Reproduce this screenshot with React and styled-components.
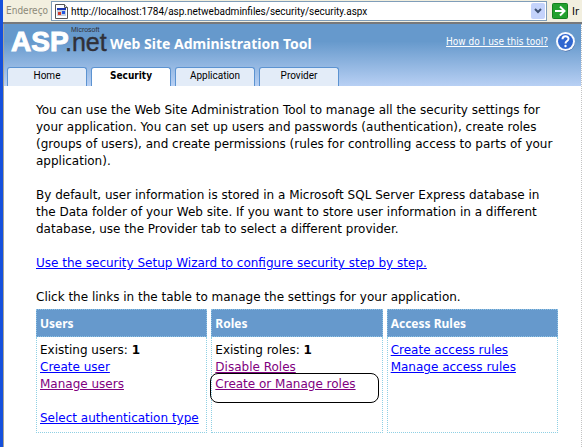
import React from 'react'
import styled, { createGlobalStyle } from 'styled-components'

const GlobalStyle = createGlobalStyle`
* { box-sizing: border-box; }
body {
  margin: 0;
  background: #fff;
  color: #000;
  font-family: "DejaVu Sans", Verdana, sans-serif;
  font-size: 12px;
  line-height: 17px;
}
`

const Page = styled.div`
  min-height: 100vh;
  border-left: 3px solid #1550dc;
  overflow-x: hidden;
`

const AddressBar = styled.form`
  display: flex;
  align-items: center;
  height: 24px;
  padding-left: 3px;
  background: #f2efdf;
  border-bottom: 2px solid #77797c;
  font-family: "DejaVu Sans Condensed", Tahoma, sans-serif;
  font-size: 10px;
  line-height: 14px;
`

const AddressLabel = styled.label`
  width: 45px;
  color: #8b8878;
`

const AddressField = styled.div`
  display: flex;
  flex: 1;
  align-items: center;
  gap: 3px;
  min-width: 0;
  height: 20px;
  padding: 0 1px 0 3px;
  background: #fff;
  border: 1px solid #7f9db9;
`

const AddressInput = styled.input`
  flex: 1;
  min-width: 0;
  padding: 0;
  border: none;
  outline: none;
  background: transparent;
  color: #000;
  font-family: Roboto, Tahoma, sans-serif;
  font-size: 10px;
`

const DropButton = styled.button`
  display: flex;
  align-items: center;
  justify-content: center;
  width: 14px;
  height: 16px;
  padding: 0;
  border: none;
  border-radius: 2px;
  background: #c4d3fb;
`

const GoButton = styled.button`
  display: flex;
  align-items: center;
  gap: 4px;
  width: 35px;
  padding: 0 0 0 5px;
  border: none;
  background: transparent;
  color: #000;
  font-family: inherit;
  font-size: 11px;
`

const Main = styled.div`
  min-height: calc(100vh - 24px);
  border-left: 1px solid #a9a595;
  border-right: 1px dotted #c4c4c4;
`

const Banner = styled.header`
  background: linear-gradient(#6699cc 0%, #6699cc 28%, #b8d0f4 100%);
`

const BannerTop = styled.div`
  display: flex;
  align-items: center;
  height: 43px;
  padding: 0 5px 8px 6px;
`

const Title = styled.h1`
  flex: 1;
  margin: 0;
  padding-top: 4px;
  color: #fff;
  font-family: "Noto Sans", sans-serif;
  font-size: 14px;
  line-height: 18px;
  white-space: nowrap;
`

const HelpLink = styled.a`
  display: flex;
  align-items: center;
  gap: 7px;
  color: #fff;
  font-family: "DejaVu Sans Condensed", Tahoma, sans-serif;
  font-size: 10px;
  line-height: 14px;
  white-space: nowrap;
`

const Tabs = styled.nav`
  display: flex;
  gap: 4px;
  padding-left: 3px;
`

const Tab = styled.a`
  width: 80px;
  height: 19px;
  border: 1px solid #5c93d1;
  border-bottom: none;
  border-radius: 3px 3px 0 0;
  background: ${props => props.$active ? '#fff' : '#e3ecf8'};
  color: #000;
  font-family: ${props => props.$active ? '"DejaVu Sans Condensed"' : 'Roboto'}, Tahoma, sans-serif;
  font-size: 10px;
  font-weight: ${props => props.$active ? 700 : 400};
  line-height: 15px;
  text-align: center;
  text-decoration: none;
`

const Content = styled.main`
  padding: 16px 23px 16px 32px;
`

const Text = styled.p`
  margin: 0 0 17px;
  white-space: nowrap;
`

const Link = styled.a`
  color: ${props => props.$visited ? '#800080' : '#0000ff'};
  text-decoration: underline;
`

const SettingsTable = styled.table`
  width: calc(100% + 8px);
  margin: -14px -4px 0;
  table-layout: fixed;
  border-collapse: separate;
  border-spacing: 4px 0;
`

const HeadCell = styled.th`
  height: 28px;
  padding: 0 3px;
  background: #6699cc;
  border: 1px dotted #8fc3e4;
  color: #fff;
  font-family: "Noto Sans", sans-serif;
  font-size: 12px;
  text-align: left;
`

const Cell = styled.td`
  height: 94px;
  padding: 5px 3px;
  border: 1px dotted #8fd0e4;
  border-top: none;
  vertical-align: top;
  white-space: nowrap;
`

const Line = styled.div`
  min-height: 17px;
`

const Ringed = styled.span`
  position: relative;

  &::after {
    content: "";
    position: absolute;
    top: -4px;
    left: -5px;
    width: 167px;
    height: 28px;
    border: 1px solid #000;
    border-radius: 8px;
    pointer-events: none;
  }
`

const PageIcon = () => (
  <svg width="13" height="15" viewBox="0 0 13 15" aria-hidden="true">
    <path d="M.5.5h9l3 3v11H.5z" fill="#fff" stroke="#555" />
    <path d="M9.500.500v3h3" fill="#ddd" stroke="#555" />
    <path d="M2 5h9v7H2z" fill="#c8d0dc" />
    <path d="M2 4h9v2H2z" fill="#1b36b0" />
    <path d="M3 8h3v3H3z" fill="#d43c2c" />
    <path d="M7 7h3v3H7z" fill="#2456e0" />
  </svg>
)

const Chevron = () => (
  <svg width="8" height="6" viewBox="0 0 8 6" aria-hidden="true">
    <path d="M1 1l3 3 3-3" fill="none" stroke="#3e5173" strokeWidth="2" />
  </svg>
)

const GoIcon = () => (
  <svg width="16" height="16" viewBox="0 0 16 16" aria-hidden="true">
    <rect x=".5" y=".5" width="15" height="15" rx="1" fill="#24a02e" stroke="#15801e" />
    <path d="M3 8h9M8 3.500L12.500 8 8 12.500" fill="none" stroke="#fff" strokeWidth="2" />
  </svg>
)

const HelpIcon = () => (
  <svg width="21" height="21" viewBox="0 0 21 21" aria-hidden="true">
    <circle cx="11" cy="11.500" r="9" fill="#3c5f9c" />
    <circle cx="10.500" cy="10.500" r="9.500" fill="#f7faff" />
    <circle cx="10.500" cy="10.500" r="7.500" fill="#2f66d0" />
    <path d="M7.500 8.300c0-4 6-4 6-.5 0 2.300-3 2-3 4.700" fill="none" stroke="#fff" strokeWidth="2" />
    <circle cx="10.500" cy="15" r="1.200" fill="#fff" />
  </svg>
)

const Logo = () => (
  <svg width="100" height="34" viewBox="0 0 100 34" role="img" aria-label="Microsoft ASP.net">
    <g fontFamily="Liberation Sans, Arial, sans-serif">
      <text x="1" y="26" fontSize="28" fontWeight="700" fill="#fff" stroke="#fff">ASP</text>
      <text x="55" y="26" fontSize="25" fill="#303038" stroke="#303038" strokeWidth=".4">.net</text>
      <text x="61" y="7" fontSize="7" fill="#303038">Microsoft</text>
    </g>
  </svg>
)

const tabs = ['Home', 'Security', 'Application', 'Provider']

const App = () => {
  return (
    <Page>
      <GlobalStyle />
      <AddressBar onSubmit={e => e.preventDefault()}>
        <AddressLabel htmlFor="address">Endereço</AddressLabel>
        <AddressField>
          <PageIcon />
          <AddressInput id="address" defaultValue="http://localhost:1784/asp.netwebadminfiles/security/security.aspx" />
          <DropButton type="button" aria-label="Endereço"><Chevron /></DropButton>
        </AddressField>
        <GoButton type="submit"><GoIcon />Ir</GoButton>
      </AddressBar>
      <Main>
        <Banner>
          <BannerTop>
            <Logo />
            <Title>Web Site Administration Tool</Title>
            <HelpLink href="#help">How do I use this tool?<HelpIcon /></HelpLink>
          </BannerTop>
          <Tabs>
            {tabs.map(tab => (
              <Tab key={tab} href={'#' + tab.toLowerCase()} $active={tab === 'Security'}>{tab}</Tab>
            ))}
          </Tabs>
        </Banner>
        <Content>
          <Text>
            You can use the Web Site Administration Tool to manage all the security settings for<br />
            your application. You can set up users and passwords (authentication), create roles<br />
            (groups of users), and create permissions (rules for controlling access to parts of your<br />
            application).
          </Text>
          <Text>
            By default, user information is stored in a Microsoft SQL Server Express database in<br />
            the Data folder of your Web site. If you want to store user information in a different<br />
            database, use the Provider tab to select a different provider.
          </Text>
          <Text><Link href="#wizard">Use the security Setup Wizard to configure security step by step.</Link></Text>
          <Text>Click the links in the table to manage the settings for your application.</Text>
          <SettingsTable>
            <thead>
              <tr>
                <HeadCell>Users</HeadCell>
                <HeadCell>Roles</HeadCell>
                <HeadCell>Access Rules</HeadCell>
              </tr>
            </thead>
            <tbody>
              <tr>
                <Cell>
                  <Line>Existing users: <b>1</b></Line>
                  <Line><Link href="#create-user">Create user</Link></Line>
                  <Line><Link href="#manage-users" $visited>Manage users</Link></Line>
                  <Line />
                  <Line><Link href="#authentication">Select authentication type</Link></Line>
                </Cell>
                <Cell>
                  <Line>Existing roles: <b>1</b></Line>
                  <Line><Link href="#disable-roles" $visited>Disable Roles</Link></Line>
                  <Line><Ringed><Link href="#manage-roles" $visited>Create or Manage roles</Link></Ringed></Line>
                </Cell>
                <Cell>
                  <Line><Link href="#create-rules">Create access rules</Link></Line>
                  <Line><Link href="#manage-rules">Manage access rules</Link></Line>
                </Cell>
              </tr>
            </tbody>
          </SettingsTable>
        </Content>
      </Main>
    </Page>
  )
}

export default App
